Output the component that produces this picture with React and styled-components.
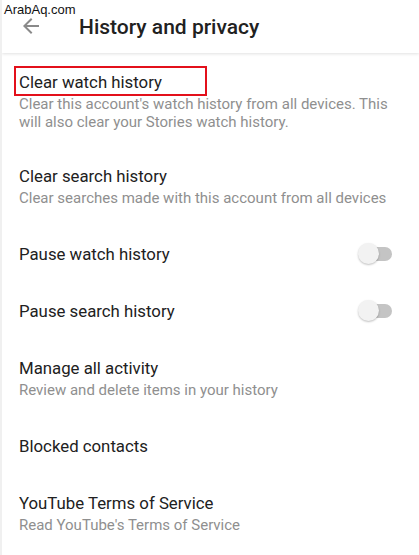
import styled, { createGlobalStyle } from 'styled-components';
import React from "react";

const Global = createGlobalStyle`
	html, body {
		margin: 0;
		padding: 0;
		background: #fff;
	}
	body {
		font-family: Roboto, "Liberation Sans", sans-serif;
	}
`;

const Page = styled.div`
	width: 419px;
	height: 555px;
	position: relative;
	overflow: hidden;
	background: #fff;
	border-left: 2px solid #f0f0f0;
	box-sizing: border-box;
`;

const Watermark = styled.div`
	position: absolute;
	top: 2px;
	left: 2px;
	font-family: "Liberation Sans", Arial, sans-serif;
	font-size: 13px;
	color: #111;
	z-index: 10;
`;

const Header = styled.div`
	height: 53px;
	display: flex;
	align-items: center;
	box-shadow: 0 1px 3px rgba(0, 0, 0, 0.12);
	position: relative;
	z-index: 2;
`;

const Back = styled.div`
	padding-left: 17px;
	display: flex;
	align-items: center;
	box-sizing: border-box;
	width: 77px;
	margin-top: -1px;
`;

const Title = styled.div`
	font-size: 21px;
	font-weight: 500;
	color: #212121;
	margin-top: 0;
`;

const List = styled.div`
	display: flex;
	flex-direction: column;
`;

const Row = styled.div`
	display: flex;
	align-items: center;
	justify-content: space-between;
	padding: 18px 24px ${p => p.$bottom}px 17px;
`;

const Texts = styled.div`
	display: flex;
	flex-direction: column;
	flex: 1;
`;

const Label = styled.div`
	font-size: 16.8px;
	line-height: 22px;
	color: #212121;
	position: relative;
	align-self: flex-start;

	${p => p.$marked && `
		&::after {
			content: '';
			position: absolute;
			left: -5px;
			top: -5px;
			width: 193px;
			height: 30px;
			border: 2px solid #e3101b;
			box-sizing: border-box;
		}
	`}
`;

const Sub = styled.div`
	margin-top: 2px;
	font-size: 15px;
	line-height: 18px;
	color: #8f8f8f;
	padding-right: 4px;
`;

const Switch = styled.div`
	position: relative;
	width: 34px;
	height: 22px;
	flex-shrink: 0;
	margin-right: 3px;
`;

const Track = styled.div`
	position: absolute;
	left: 2px;
	right: 0;
	top: 4px;
	height: 14px;
	border-radius: 7px;
	background: #c4c4c4;
`;

const Thumb = styled.div`
	position: absolute;
	left: 0;
	top: 0;
	width: 21px;
	height: 21px;
	border-radius: 50%;
	background: #f2f2f2;
	box-shadow: 0 1px 2px rgba(0, 0, 0, 0.25);
`;

function Toggle() {
	return (
		<Switch>
			<Track />
			<Thumb />
		</Switch>
	);
}

const items = [
	{ title: 'Clear watch history', sub: "Clear this account's watch history from all devices. This will also clear your Stories watch history.", marked: true, bottom: 16 },
	{ title: 'Clear search history', sub: 'Clear searches made with this account from all devices', bottom: 18 },
	{ title: 'Pause watch history', toggle: true, bottom: 17 },
	{ title: 'Pause search history', toggle: true, bottom: 17 },
	{ title: 'Manage all activity', sub: 'Review and delete items in your history', bottom: 18 },
	{ title: 'Blocked contacts', bottom: 17 },
	{ title: 'YouTube Terms of Service', sub: "Read YouTube's Terms of Service", bottom: 18 },
];

function App() {
	return (
		<Page>
			<Global />
			<Watermark>ArabAq.com</Watermark>
			<Header>
				<Back>
					<svg width="24" height="24" viewBox="0 0 24 24">
						<path d="M20 11H7.83l5.59-5.59L12 4l-8 8 8 8 1.41-1.41L7.83 13H20v-2z" fill="#8a8a8a" />
					</svg>
				</Back>
				<Title>History and privacy</Title>
			</Header>
			<List>
				{items.map(item => (
					<Row key={item.title} $bottom={item.bottom}>
						<Texts>
							<Label $marked={item.marked}>{item.title}</Label>
							{item.sub && <Sub>{item.sub}</Sub>}
						</Texts>
						{item.toggle && <Toggle />}
					</Row>
				))}
			</List>
		</Page>
	);
}

export default App;
